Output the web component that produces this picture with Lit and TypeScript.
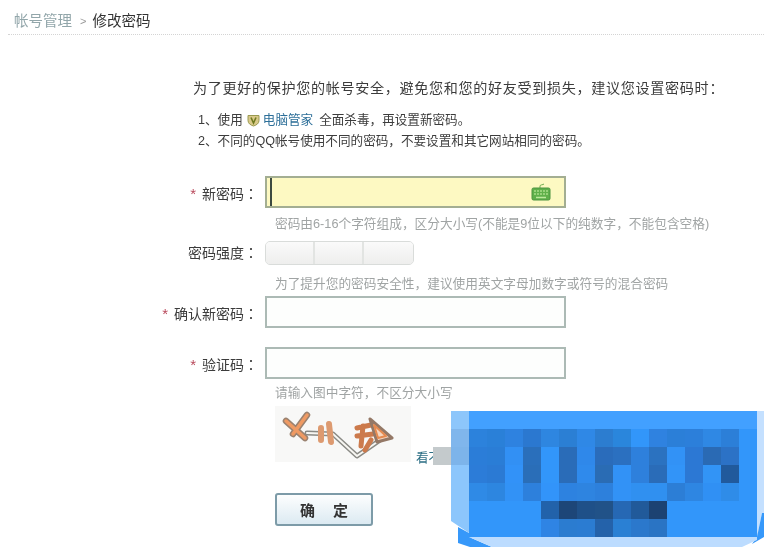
import { LitElement, html, css, svg } from "lit";
import { customElement } from "lit/decorators.js";

const B = "#3296fa";
const ROWS: string[][] = [
  Array(16).fill("#42a0ff"),
  ["#2c82dc","#2a80d8","#2e82e0","#2b78d0","#2e86e0","#2b7fd4","#2f88e6","#2c7dd0","#2a86dc",B,"#2f82e0","#2b7fd8","#2c7fda","#2f88e4","#2c7fd8",B],
  ["#2b7dd8","#2a7dd6","#3290f4","#2a6fbb",B,"#2a6cb8","#2f88ea","#2a6cbb","#2b70c0","#2e80dc","#2b72c0","#3292f6","#2c78d4","#2a6ab4","#2c72c6",B],
  ["#2c7cd8","#2b7ad4","#3292f8","#2a6eb8",B,"#2a6cb8","#2f8aec","#2a6cb4","#3292f6","#2e80dc","#2a6cb8","#3294f8","#2c78d4","#3294f6","#215a9c",B],
  ["#2f8ae6","#2d86e0","#3292f6","#2d80dc","#3294fa","#2d82e0","#2e84e0","#2d80dc","#3292f6","#3090f0","#3090f0","#2c7ed6","#2e86e2","#3090f4","#2f8ce8",B],
  [B,B,B,B,"#2262aa","#1d4678","#1f5088","#215288","#2668b4","#215a9a","#1c4272",B,B,B,B,B],
  [B,B,B,B,"#2f84e4","#2b7cd0","#2b7cd2","#2462aa","#2a80d4","#2b78cc","#2a74c4",B,B,B,B,B],
];
const STRIP = ["#8dc6fb", "#80b6ec", "#7db4ea", "#8cc6fc", "#8cc6fc", "#8cc6fc"];

@customElement("app-root")
export class AppRoot extends LitElement {
  static styles = css`
    :host { display: block; position: relative; width: 764px; height: 547px; overflow: hidden; background: #fff;
      font-family: "Liberation Sans", "Noto Sans CJK SC", sans-serif; color: #333; }
    .page { height: 547px; filter: blur(0.5px); }
    .crumb { height: 35px; box-sizing: border-box; padding: 7px 0 0 6px; margin-left: 8px; display: flex; align-items: center;
      font-size: 14.5px; line-height: 18px; border-bottom: 1px dotted #d4d4d4; }
    .crumb .faded { color: #92a6aa; width: 58px; filter: blur(0.7px); }
    .crumb .sep { color: #999; font-size: 11px; margin: 0 6px 0 8px; }
    .content { padding: 44px 0 0 193px; }
    .intro { font-size: 14.100px; line-height: 18px; letter-spacing: 0.66px; margin: 0; white-space: nowrap; color: #3c3c3c; }
    .notes { margin: 13px 0 0 5px; font-size: 12.600px; line-height: 21px; white-space: nowrap; color: #3c3c3c; }
    .notes div { display: flex; align-items: center; height: 21px; }
    .notes svg { margin-left: 4px; }
    .notes a { color: #2d6f99; margin: 0 6px 0 3px; }
    .form { margin: 24px 0 0 -193px; display: grid; grid-template-columns: 258px 1fr; column-gap: 7px; width: 764px; }
    .label { font-family: "Liberation Sans", "Noto Sans CJK TC", sans-serif; font-size: 14px; line-height: 20px; text-align: right;
      white-space: nowrap; color: #3c3c3c; align-self: center; }
    .label.shift { padding-top: 4px; }
    .label i { color: #b8485a; font-style: normal; margin-right: 6px; font-size: 15px; }
    .input { width: 301px; height: 32px; box-sizing: border-box; border: 2px solid #acbab5; background: #fdfefd; }
    .input.active { background: #fdf9c2; border-color: #a3ae92; display: flex; align-items: center; justify-content: space-between; padding: 0 13px 0 3px; }
    .caret { width: 1.500px; height: 28px; background: #3d4a40; }
    .hint { grid-column: 2; padding-left: 10px; font-size: 12.700px; line-height: 16px; color: #a0a4a4; white-space: nowrap; }
    .h1 { margin: 8px 0 9px; }
    .h2 { margin: 11px 0 4px; }
    .h3 { margin: 6px 0 5px; }
    .gap { grid-column: 1 / -1; height: 19px; }
    .strength { width: 149px; height: 24px; display: grid; grid-template-columns: repeat(3, 1fr); box-sizing: border-box;
      border: 1px solid #d9dcda; border-radius: 5px; overflow: hidden; background: #f4f4f3; }
    .strength span { border-right: 2px solid #e2e4e2; background: linear-gradient(#fafafa, #eeeeed); }
    .strength span:last-child { border-right: 0; }
    .cap { grid-column: 2; display: flex; align-items: flex-end; padding-left: 10px; }
    .capimg { width: 136px; height: 56px; background: #f8f8f7; display: block; }
    .capimg g { filter: blur(0.6px); }
    .more { font-size: 12.600px; line-height: 16px; color: #2d6f85; margin: 0 0 -4px 5px; white-space: nowrap; }
    .btnrow { grid-column: 2; padding: 31px 0 0 10px; }
    button { width: 98px; height: 33px; padding: 0; border: 2px solid #7d9ba8; border-radius: 3px;
      font: bold 15px "Liberation Serif", "Noto Sans CJK SC", serif;
      letter-spacing: 18px; text-indent: 18px; color: #333; background: linear-gradient(#fdfefe, #dceaf2); }
    .mosaic { position: absolute; left: 430px; top: 400px; display: block; }
  `;

  private mosaic() {
    const cells = ROWS.flatMap((r, y) =>
      r.map((c, x) => svg`<rect x=${39 + x * 18} y=${11 + y * 18} width="18.500" height="18.500" fill=${c}></rect>`));
    const strip = STRIP.map((c, y) =>
      svg`<rect x="21" y=${11 + y * 18} width="18" height="18.500" fill=${c}></rect>`);
    return html`<svg class="mosaic" width="334" height="147" viewBox="0 0 334 147">
      <rect x="3" y="47" width="18" height="18" fill="#c4cacc"></rect>
      <polygon points="28,127 39,133 39,137 62,147 40,147 28,143" fill="#3698fa"></polygon>
      ${strip}
      <polygon points="21,119 21,121 39,133 39,119" fill="#8cc6fc"></polygon>
      ${cells}
      <polygon points="327,11 334,11 334,113 332,113 327,137" fill="#c4e0ff"></polygon>
      <polygon points="332,113 334,113 334,137 322,144 327,137" fill="#3698fa"></polygon>
      <polygon points="39,137 327,137 327,140 312,147 62,147" fill="#bcdcff"></polygon>
    </svg>`;
  }

  render() {
    return html`
      <div class="page">
        <div class="crumb"><span class="faded">帐号管理</span><span class="sep">&gt;</span><span>修改密码</span></div>
        <div class="content">
          <p class="intro">为了更好的保护您的帐号安全，避免您和您的好友受到损失，建议您设置密码时：</p>
          <div class="notes">
            <div>1、使用<svg width="13" height="13" viewBox="0 0 13 13"><path d="M1 1.500h11v5c0 3-2.500 4.600-5.500 5.500C3.500 11.100 1 9.500 1 6.500z" fill="#d9c98a" stroke="#9a9a50"/><path d="M4 3.500l2.500 5.500L9 3.500" fill="none" stroke="#6f7a20" stroke-width="1.600"/></svg><a>电脑管家</a>全面杀毒，再设置新密码。</div>
            <div>2、不同的QQ帐号使用不同的密码，不要设置和其它网站相同的密码。</div>
          </div>
          <div class="form">
            <div class="label shift"><i>*</i>新密码：</div>
            <div class="input active"><span class="caret"></span>
              <svg width="20" height="18" viewBox="0 0 20 18"><path d="M9 5V3c0-1.500 3-1 4-2" fill="none" stroke="#6fae50"/><rect x="1" y="5" width="18" height="12" rx="1.500" fill="#5fb04a" stroke="#4d9440"/><path d="M3 8h14M3 11h14" stroke="#a8dc88" stroke-width="1.500" stroke-dasharray="2 1"/><path d="M5 14.500h10" stroke="#bce89c" stroke-width="1.500"/></svg>
            </div>
            <div class="hint h1">密码由6-16个字符组成，区分大小写(不能是9位以下的纯数字，不能包含空格)</div>
            <div class="label">密码强度：</div>
            <div class="strength"><span></span><span></span><span></span></div>
            <div class="hint h2">为了提升您的密码安全性，建议使用英文字母加数字或符号的混合密码</div>
            <div class="label shift"><i>*</i>确认新密码：</div>
            <div class="input"></div>
            <div class="gap"></div>
            <div class="label shift"><i>*</i>验证码：</div>
            <div class="input"></div>
            <div class="hint h3">请输入图中字符，不区分大小写</div>
            <div class="cap">
              <svg class="capimg" viewBox="0 0 136 56">
                <g fill="none" stroke-linecap="round" stroke-linejoin="round">
                  <path d="M32 27l26 1 24 22 26-18" stroke="#8a8a85" stroke-width="5"/>
                  <path d="M32 27l26 1 24 22 26-18" stroke="#f7f6f2" stroke-width="2"/>
                  <path d="M11 15l19 17M32 9L18 28" stroke="#9a8270" stroke-width="6.500"/>
                  <path d="M11 15l19 17M32 9L18 28" stroke="#ef9a63" stroke-width="3.500"/>
                  <path d="M46 22v12M54 18l2 18" stroke="#dd9a70" stroke-width="6"/>
                  <path d="M82 22l14-3M82 30l16-2M88 20l-2 20M96 34l-6 10" stroke="#cc7a4c" stroke-width="5"/>
                  <path d="M95 13l22 19-15 4z" fill="#f6d6bf" stroke="#947866" stroke-width="3"/>
                  <path d="M99 19l12 11-8 2z" stroke="#e58a50" stroke-width="2"/>
                </g>
              </svg>
              <a class="more">看不清</a>
            </div>
            <div class="btnrow"><button>确定</button></div>
          </div>
        </div>
      </div>
      ${this.mosaic()}
    `;
  }
}
